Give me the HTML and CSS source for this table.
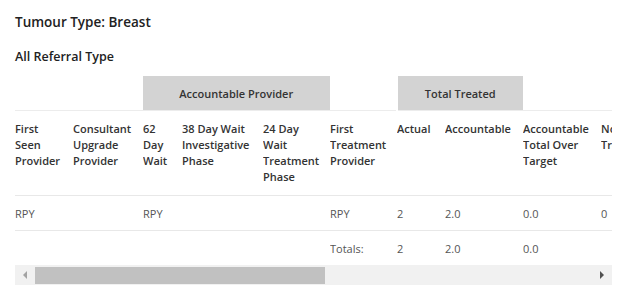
FILE: index.html
```html
<!DOCTYPE html>
<html>
<head>
<meta charset="utf-8">
<link rel="stylesheet" href="styles.css">
</head>
<body>
<div class="report">
  <h2 class="title">Tumour Type: Breast</h2>
  <h3 class="subtitle">All Referral Type</h3>
  <div class="scroller">
    <table class="grid">
      <colgroup>
        <col class="c58"><col class="c70"><col class="c39"><col class="c81"><col class="c67"><col class="c67"><col class="c48"><col class="c78"><col class="c78"><col class="c100"><col class="c80"><col class="c80"><col class="c80"><col class="c80"><col class="c80"><col class="c62">
      </colgroup>
      <thead>
        <tr class="group-row">
          <th colspan="2"></th>
          <th colspan="3" class="group">Accountable Provider</th>
          <th colspan="1"></th>
          <th colspan="2" class="group group-tt">Total Treated</th>
          <th colspan="8"></th>
        </tr>
        <tr class="head-row">
          <th>First Seen Provider</th>
          <th>Consultant Upgrade Provider</th>
          <th>62 Day Wait</th>
          <th>38 Day Wait Investigative Phase</th>
          <th>24 Day Wait Treatment Phase</th>
          <th>First Treatment Provider</th>
          <th>Actual</th>
          <th>Accountable</th>
          <th>Accountable Total Over Target</th>
          <th>Non Accountable Treated</th>
          <th>Within 62 Days</th>
          <th>Over 62 Days</th>
          <th>Accountable Within</th>
          <th>Accountable Over</th>
          <th>Performance</th>
          <th>Target</th>
        </tr>
      </thead>
      <tbody>
        <tr class="data-row">
          <td>RPY</td><td></td><td>RPY</td><td></td><td></td><td>RPY</td><td>2</td><td>2.0</td><td>0.0</td><td>0</td><td>2</td><td>0</td><td>2.0</td><td>0.0</td><td>100%</td><td>85%</td>
        </tr>
        <tr class="total-row">
          <td></td><td></td><td></td><td></td><td></td><td>Totals:</td><td>2</td><td>2.0</td><td>0.0</td><td></td><td></td><td></td><td></td><td></td><td></td><td></td>
        </tr>
      </tbody>
    </table>
  </div>
  <div class="scrollbar">
    <div class="sb-btn"><span class="tri tri-left"></span></div>
    <div class="sb-track"><div class="sb-thumb"></div></div>
    <div class="sb-btn"><span class="tri tri-right"></span></div>
  </div>
</div>
</body>
</html>
```
FILE: styles.css
```css
html, body {
  margin: 0;
  padding: 0;
  background: #fff;
}
body {
  font-family: "Open Sans", "Noto Sans", sans-serif;
  color: #333;
}
.report {
  padding: 12px 12px 0 15px;
  width: 597px;
}
.title {
  margin: 0;
  font-size: 13.5px;
  font-weight: 600;
  line-height: 20px;
  color: #222;
}
.subtitle {
  margin: 16px 0 0;
  font-size: 12.5px;
  font-weight: 600;
  line-height: 18px;
  color: #222;
}
.scroller {
  margin-top: 10px;
  width: 597px;
  overflow: hidden;
}
.grid {
  border-collapse: collapse;
  table-layout: fixed;
  width: 1148px;
}
.c58 { width: 58px; }
.c70 { width: 70px; }
.c39 { width: 39px; }
.c81 { width: 81px; }
.c67 { width: 67px; }
.c48 { width: 48px; }
.c78 { width: 78px; }
.c80 { width: 80px; }
.c100 { width: 100px; }
.c62 { width: 62px; }
.grid th, .grid td {
  padding: 0 8px 0 0;
  text-align: left;
  vertical-align: top;
  font-size: 11px;
  overflow: hidden;
}
.group-row th {
  height: 34px;
  border-bottom: 1px solid #ececec;
  vertical-align: middle;
  padding: 0;
}
.group-row .group {
  background: #d3d3d3;
  text-align: center;
  font-weight: 600;
  color: #333;
  border-right: 1px solid #fff;
}
.group-row .group-tt {
  border-left: 2px solid #fff;
}
.head-row th {
  font-weight: 600;
  line-height: 16px;
  height: 64px;
  padding-top: 10px;
  padding-bottom: 10px;
  border-bottom: 1px solid #e8e8e8;
  color: #333;
}
.data-row td, .total-row td {
  height: 34px;
  vertical-align: middle;
  color: #555;
  font-weight: 400;
}
.data-row td {
  border-bottom: 1px solid #e8e8e8;
}
.scrollbar {
  display: flex;
  height: 20px;
  background: #f1f1f1;
  width: 597px;
}
.sb-btn {
  width: 20px;
  display: flex;
  align-items: center;
  justify-content: center;
}
.sb-track {
  flex: 1;
  display: flex;
  align-items: center;
}
.sb-thumb {
  width: 290px;
  height: 17px;
  background: #c1c1c1;
}
.tri {
  width: 0;
  height: 0;
  border-top: 4px solid transparent;
  border-bottom: 4px solid transparent;
}
.tri-left {
  border-right: 4px solid #a3a3a3;
}
.tri-right {
  border-left: 4px solid #505050;
}
```
